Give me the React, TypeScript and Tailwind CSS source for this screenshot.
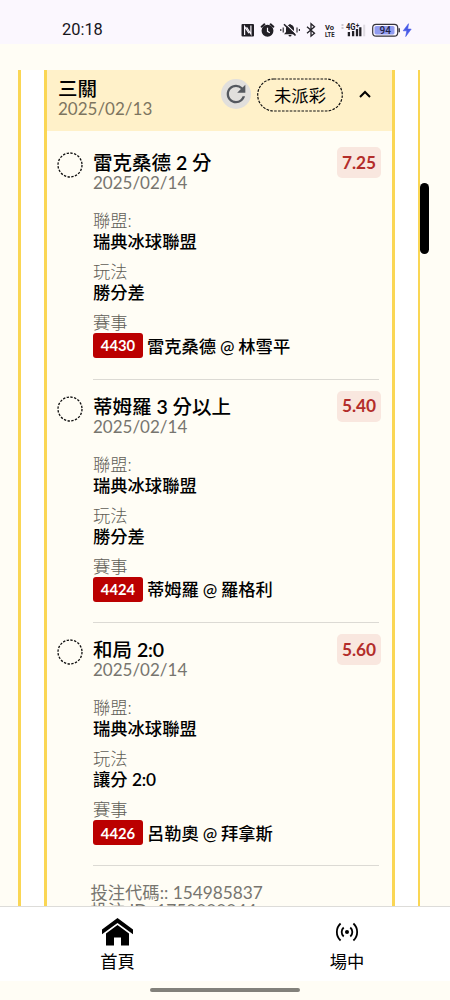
import clsx from "clsx";
import { MdRefresh } from "react-icons/md";

type Leg = {
  pick: string;
  date: string;
  odds: string;
  league: string;
  market: string;
  code: string;
  match: string;
};

const legs: Leg[] = [
  {
    pick: "雷克桑德 2 分",
    date: "2025/02/14",
    odds: "7.25",
    league: "瑞典冰球聯盟",
    market: "勝分差",
    code: "4430",
    match: "雷克桑德 @ 林雪平",
  },
  {
    pick: "蒂姆羅 3 分以上",
    date: "2025/02/14",
    odds: "5.40",
    league: "瑞典冰球聯盟",
    market: "勝分差",
    code: "4424",
    match: "蒂姆羅 @ 羅格利",
  },
  {
    pick: "和局 2:0",
    date: "2025/02/14",
    odds: "5.60",
    league: "瑞典冰球聯盟",
    market: "讓分 2:0",
    code: "4426",
    match: "呂勒奧 @ 拜拿斯",
  },
];

const ui = {
  label: "h-5 text-[17.3px] leading-5 font-light text-[#5f5d57]",
  value: "h-5 text-[17.3px] leading-[21px] font-medium text-black",
  date: "text-[17px] leading-[18px]",
} as const;

// Digits need a heavier weight than the CJK glyphs to look even.
function Mixed({ text }: { text: string }) {
  return (
    <>
      {text.split(/([\d:]+)/).map((part, i) =>
        i % 2 ? (
          <span key={i} className="font-semibold tracking-[-0.2px]">{part}</span>
        ) : (
          part
        ),
      )}
    </>
  );
}

function StatusBar() {
  return (
    <div className="flex h-11 shrink-0 items-center bg-[#fbf7fe] pt-4 pl-[62px] font-['Roboto','Noto_Sans',sans-serif] text-[#17151a]">
      <span className="w-[179px] text-[16.4px] leading-5">20:18</span>
      <svg width="172" height="18" viewBox="241 21.500 172 18" fill="none">
        {/* NFC */}
        <rect x="241.500" y="24.500" width="12.500" height="12.500" rx="1" fill="#222026" />
        <path d="M244.600 35.500v-8.500l4.300 6.800M250.900 26v8.500l-4.300-6.800" stroke="#fbf7fe" strokeWidth="1.200" />
        {/* alarm */}
        <circle cx="267.500" cy="31.300" r="4.800" stroke="#222026" strokeWidth="2.300" fill="#222026" />
        <path d="M261.600 27.200l2.800-2.400M273.400 27.200l-2.800-2.400" stroke="#222026" strokeWidth="2" strokeLinecap="round" />
        <path d="M267.500 28.300v3.500l2.300 1.400" stroke="#fbf7fe" strokeWidth="1.200" />
        {/* muted bell */}
        <path d="M284 34.700l2-2.200v-3.300c0-2 1.300-3.500 3-4a1.100 1.100 0 0 1 2 0c1.900.5 3 2 3 4v3.300l2 2.200zM288.500 35.400h3a1.500 1.500 0 0 1-3 0z" fill="#222026" />
        <path d="M285.300 24.200l11.500 10.800" stroke="#fbf7fe" strokeWidth="1.100" />
        <path d="M284 24.800l11.500 11.200" stroke="#222026" strokeWidth="1.600" />
        <path d="M280.800 29.500v2M283.200 28v5M297 28v5M299.400 29.500v2" stroke="#222026" strokeWidth="1.100" />
        {/* bluetooth */}
        <path d="M307 27.200l7.500 6.500-3.500 3v-12.500l3.500 3-7.500 6.500" stroke="#222026" strokeWidth="1.300" />
        <g fill="#222026" className="font-['Roboto',sans-serif] font-bold">
          <text x="325" y="30" fontSize="7.800" textLength="9" lengthAdjust="spacingAndGlyphs">Vo</text>
          <text x="325" y="37" fontSize="7.800" textLength="9.500" lengthAdjust="spacingAndGlyphs">LTE</text>
          <text x="346" y="30" fontSize="8.600" textLength="9.500" lengthAdjust="spacingAndGlyphs">4G</text>
          <text x="355.800" y="28" fontSize="6.500">+</text>
        </g>
        <path d="M342.500 24.500v2M342.500 27.500v2" stroke="#cbc7ce" strokeWidth="2" />
        <path d="M348.900 36.800v-4.300M353.100 36.800v-5.300M357 36.800v-7.300M360.300 36.800v-9" stroke="#222026" strokeWidth="2.300" />
        <path d="M364.200 36.800V25.200" stroke="#dedae1" strokeWidth="2" />
        {/* battery */}
        <rect x="372.700" y="24.800" width="25" height="11.800" rx="3.400" stroke="#35333b" strokeWidth="1.200" />
        <rect x="374.500" y="26.500" width="20" height="8.400" rx="1.600" fill="#929cf0" />
        <path d="M399.200 28.800v4" stroke="#35333b" strokeWidth="1.400" />
        <text x="385.200" y="34.100" fontSize="10" textAnchor="middle" fill="#242344" className="font-['Roboto',sans-serif] font-medium">94</text>
        <path d="M408.500 24.200l-5.300 7.100h3.600l-1.100 5.800 5.500-7.500h-3.500z" fill="#4659e6" stroke="#4659e6" strokeWidth="0.600" />
      </svg>
    </div>
  );
}

function PendingPill() {
  return (
    <div className="relative flex h-[34px] w-[86px] items-center justify-center pt-[2px] text-[17.3px] text-black">
      <svg className="absolute inset-0" width="86" height="34" fill="none">
        <rect x="0.700" y="1" width="84.600" height="32" rx="16" stroke="#111" strokeWidth="1.200" strokeDasharray="2.600 1.300" />
      </svg>
      未派彩
    </div>
  );
}

function SlipHeader() {
  return (
    <div className="flex h-[61px] items-start bg-[#fff1c9] pl-[11px]">
      <div className="w-[163px] pt-[7px]">
        <p className="h-[23px] text-[19.5px] leading-[23px] font-medium text-black">三關</p>
        <p className={clsx("text-[#7d7560]", ui.date)}>2025/02/13</p>
      </div>
      <div className="mt-[9px] flex size-[30px] items-center justify-center rounded-full bg-[#e1dfdc]">
        <MdRefresh className="size-[28px] text-[#54585e]" />
      </div>
      <div className="mt-2 ml-[6px]">
        <PendingPill />
      </div>
      <svg className="mt-[19px] ml-[15px]" width="14" height="10" fill="none">
        <path d="M2 8l5-5 5 5" stroke="#000" strokeWidth="2" />
      </svg>
    </div>
  );
}

function LegRow({ leg, last }: { leg: Leg; last: boolean }) {
  return (
    <div className={clsx("flex pl-[10px]", last ? "h-[243px]" : "h-[243.700px]")}>
      <svg className="mt-4 shrink-0" width="26" height="26" fill="none">
        <circle cx="13" cy="13" r="12" stroke="#111" strokeWidth="1.300" strokeDasharray="2.370 1.400" />
      </svg>
      <div className="ml-[10px] w-[286px] shrink-0 border-b border-[#dcdad4]">
        <div className="flex h-14 justify-between">
          <div className="pt-[14px]">
            <p className="h-6 text-[19.5px] leading-[25px] font-medium whitespace-nowrap text-black">
              <Mixed text={leg.pick} />
            </p>
            <p className={clsx("text-[#77756f]", ui.date)}>{leg.date}</p>
          </div>
          <span className="mt-[11px] -mr-0.5 flex h-[31px] w-[44px] items-center justify-center rounded-[5px] bg-[#f9e7df] text-[17.3px] font-bold text-[#b32d2a]">
            {leg.odds}
          </span>
        </div>
        <dl className="mt-[19px]">
          <dt className={ui.label}>聯盟:</dt>
          <dd className={ui.value}>{leg.league}</dd>
          <dt className={clsx("mt-[11px]", ui.label)}>玩法</dt>
          <dd className={ui.value}>
            <Mixed text={leg.market} />
          </dd>
          <dt className={clsx("mt-[11px]", ui.label)}>賽事</dt>
          <dd className="flex h-[25px] items-center gap-1">
            <span className="flex h-[25px] w-[50px] items-center justify-center rounded-[3px] bg-[#bb0000] text-[14.8px] font-bold text-white">
              {leg.code}
            </span>
            <span className={clsx("[word-spacing:-0.5px]", ui.value)}>{leg.match}</span>
          </dd>
        </dl>
      </div>
    </div>
  );
}

function BottomNav() {
  return (
    <nav className="flex h-[75px] shrink-0 border-t border-[#dddcd9] bg-white text-[17.3px] text-black">
      <a className="flex w-[235px] flex-col items-center pt-[11px]">
        <svg width="31" height="28" viewBox="0 0 31 28">
          <path d="M15.500 0L0 11.500v4.700L15.500 5 31 16.200v-4.700z" />
          <path d="M15.500 7L4 15.400V27.500h8v-8h7v8h8V15.400z" />
        </svg>
        <span className="mt-[6px] leading-5">首頁</span>
      </a>
      <a className="flex flex-1 flex-col items-center pt-[15px] pl-[9px]">
        <svg width="24" height="20" viewBox="0 0 24 20" fill="none" stroke="#000" strokeWidth="1.800">
          <circle cx="12" cy="10" r="2" fill="#000" stroke="none" />
          <path d="M8.700 5.500a6 6 0 0 0 0 9M15.300 5.500a6 6 0 0 1 0 9M5.600 1.500a11.500 11.500 0 0 0 0 17M18.400 1.500a11.500 11.500 0 0 1 0 17" />
        </svg>
        <span className="mt-[10px] leading-5">場中</span>
      </a>
    </nav>
  );
}

export default function App() {
  return (
    <div className="relative flex h-[1000px] w-[450px] flex-col overflow-hidden bg-[#fffdf5] font-['Lato','Noto_Sans_CJK_TC',sans-serif]">
      <StatusBar />
      <main className="mt-[26px] ml-[18px] h-[836px] w-[402px] shrink-0 overflow-hidden border-r-2 border-l-[3px] border-[#fad654] bg-white px-[23px]">
        <section className="h-full overflow-hidden border-x-[3px] border-[#fad654] bg-[#fffdf5]">
          <SlipHeader />
          <div className="mt-[5px]">
            {legs.map((leg, i) => (
              <LegRow key={leg.code} leg={leg} last={i === legs.length - 1} />
            ))}
          </div>
          <div className="mt-[18px] pl-[43.500px] text-[17.3px] leading-[18px] text-[#77756f]">
            <p>投注代碼:: 154985837</p>
            <p>投注 ID: 1750000044</p>
          </div>
        </section>
      </main>
      <BottomNav />
      <div className="flex flex-1 items-center justify-center">
        <div className="mb-[2px] h-[4px] w-[150px] rounded-full bg-[#82817b]" />
      </div>
      <div className="absolute top-[183px] left-[420px] h-[71px] w-[9px] rounded-full bg-black" />
    </div>
  );
}
